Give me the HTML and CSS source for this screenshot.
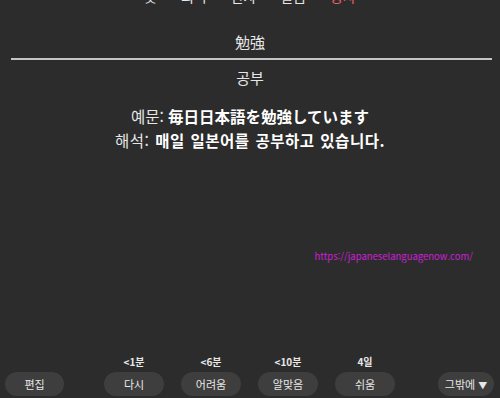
FILE: index.html
```html
<!DOCTYPE html>
<html lang="ko">
<head>
  <meta charset="UTF-8">
  <title>Review</title>
  <link rel="stylesheet" href="styles.css">
</head>
<body>
  <div class="counts">
    <span>뜻</span>
    <span>의미</span>
    <span>한자</span>
    <span>발음</span>
    <span class="due">동사</span>
  </div>

  <div class="card">
    <div class="front">勉強</div>
    <hr class="answer">
    <div class="back">공부</div>
    <div class="example">
      <div>예문: <b>毎日日本語を勉強しています</b></div>
      <div class="translation">해석: <b>매일 일본어를 공부하고 있습니다.</b></div>
    </div>
    <div class="source">https://japaneselanguagenow.com/</div>
  </div>

  <div class="bottom">
    <div class="side left">
      <button class="btn">편집</button>
    </div>
    <div class="answers">
      <div class="ease">
        <span class="time">&lt;1분</span>
        <button class="btn">다시</button>
      </div>
      <div class="ease">
        <span class="time">&lt;6분</span>
        <button class="btn">어려움</button>
      </div>
      <div class="ease">
        <span class="time">&lt;10분</span>
        <button class="btn">알맞음</button>
      </div>
      <div class="ease">
        <span class="time">4일</span>
        <button class="btn">쉬움</button>
      </div>
    </div>
    <div class="side right">
      <button class="btn more">그밖에 <span class="arrow">▼</span></button>
    </div>
  </div>
</body>
</html>
```

FILE: styles.css
```css
html, body {
  height: 100%;
}
body {
  margin: 0;
  background-color: #2c2c2c;
  color: #e6e6e6;
  font-family: "Noto Sans CJK KR", "Noto Sans", sans-serif;
  display: flex;
  flex-direction: column;
  overflow: hidden;
}
.counts {
  height: 4px;
  overflow: hidden;
  display: flex;
  justify-content: center;
  gap: 24px;
  font-size: 14px;
  line-height: 14px;
  align-items: flex-end;
  padding-left: 0;
}
.counts span {
  margin-bottom: 1px;
}
.counts .due {
  color: #e0626d;
}
.card {
  flex: 1;
  text-align: center;
  font-size: 15px;
  padding-top: 28px;
}
.front, .back {
  line-height: 20px;
}
hr.answer {
  margin: 6px 8px 0 11px;
  border: none;
  height: 2px;
  background-color: #c4c4c4;
}
.back {
  margin-top: 8px;
}
.example {
  margin-top: 16px;
  line-height: 24px;
  font-size: 15.5px;
}
.example b {
  font-weight: bold;
  color: #ffffff;
}
.translation {
  letter-spacing: 0.5px;
  word-spacing: 1px;
}
.source {
  margin-top: 97px;
  text-align: right;
  padding-right: 27px;
  font-size: 9.5px;
  line-height: 14px;
  color: #cc1fd6;
}
.bottom {
  display: grid;
  grid-template-columns: 1fr auto 1fr;
  align-items: end;
  padding: 0 6px 2px 5px;
}
.side.right {
  text-align: right;
}
.answers {
  display: flex;
  gap: 17px;
}
.ease {
  display: flex;
  flex-direction: column;
  align-items: center;
}
.time {
  font-size: 10px;
  line-height: 14px;
  margin-bottom: 3px;
  font-weight: bold;
  color: #e8e8e8;
}
.btn {
  width: 60px;
  height: 24px;
  border: none;
  border-radius: 12px;
  background-color: #3e3e3e;
  color: #e8e8e8;
  font-family: inherit;
  font-size: 11px;
  padding: 0;
  cursor: pointer;
}
.btn.more {
  width: 56px;
}
.btn .arrow {
  font-size: 9px;
}
.left .btn {
  width: 59px;
}
```
